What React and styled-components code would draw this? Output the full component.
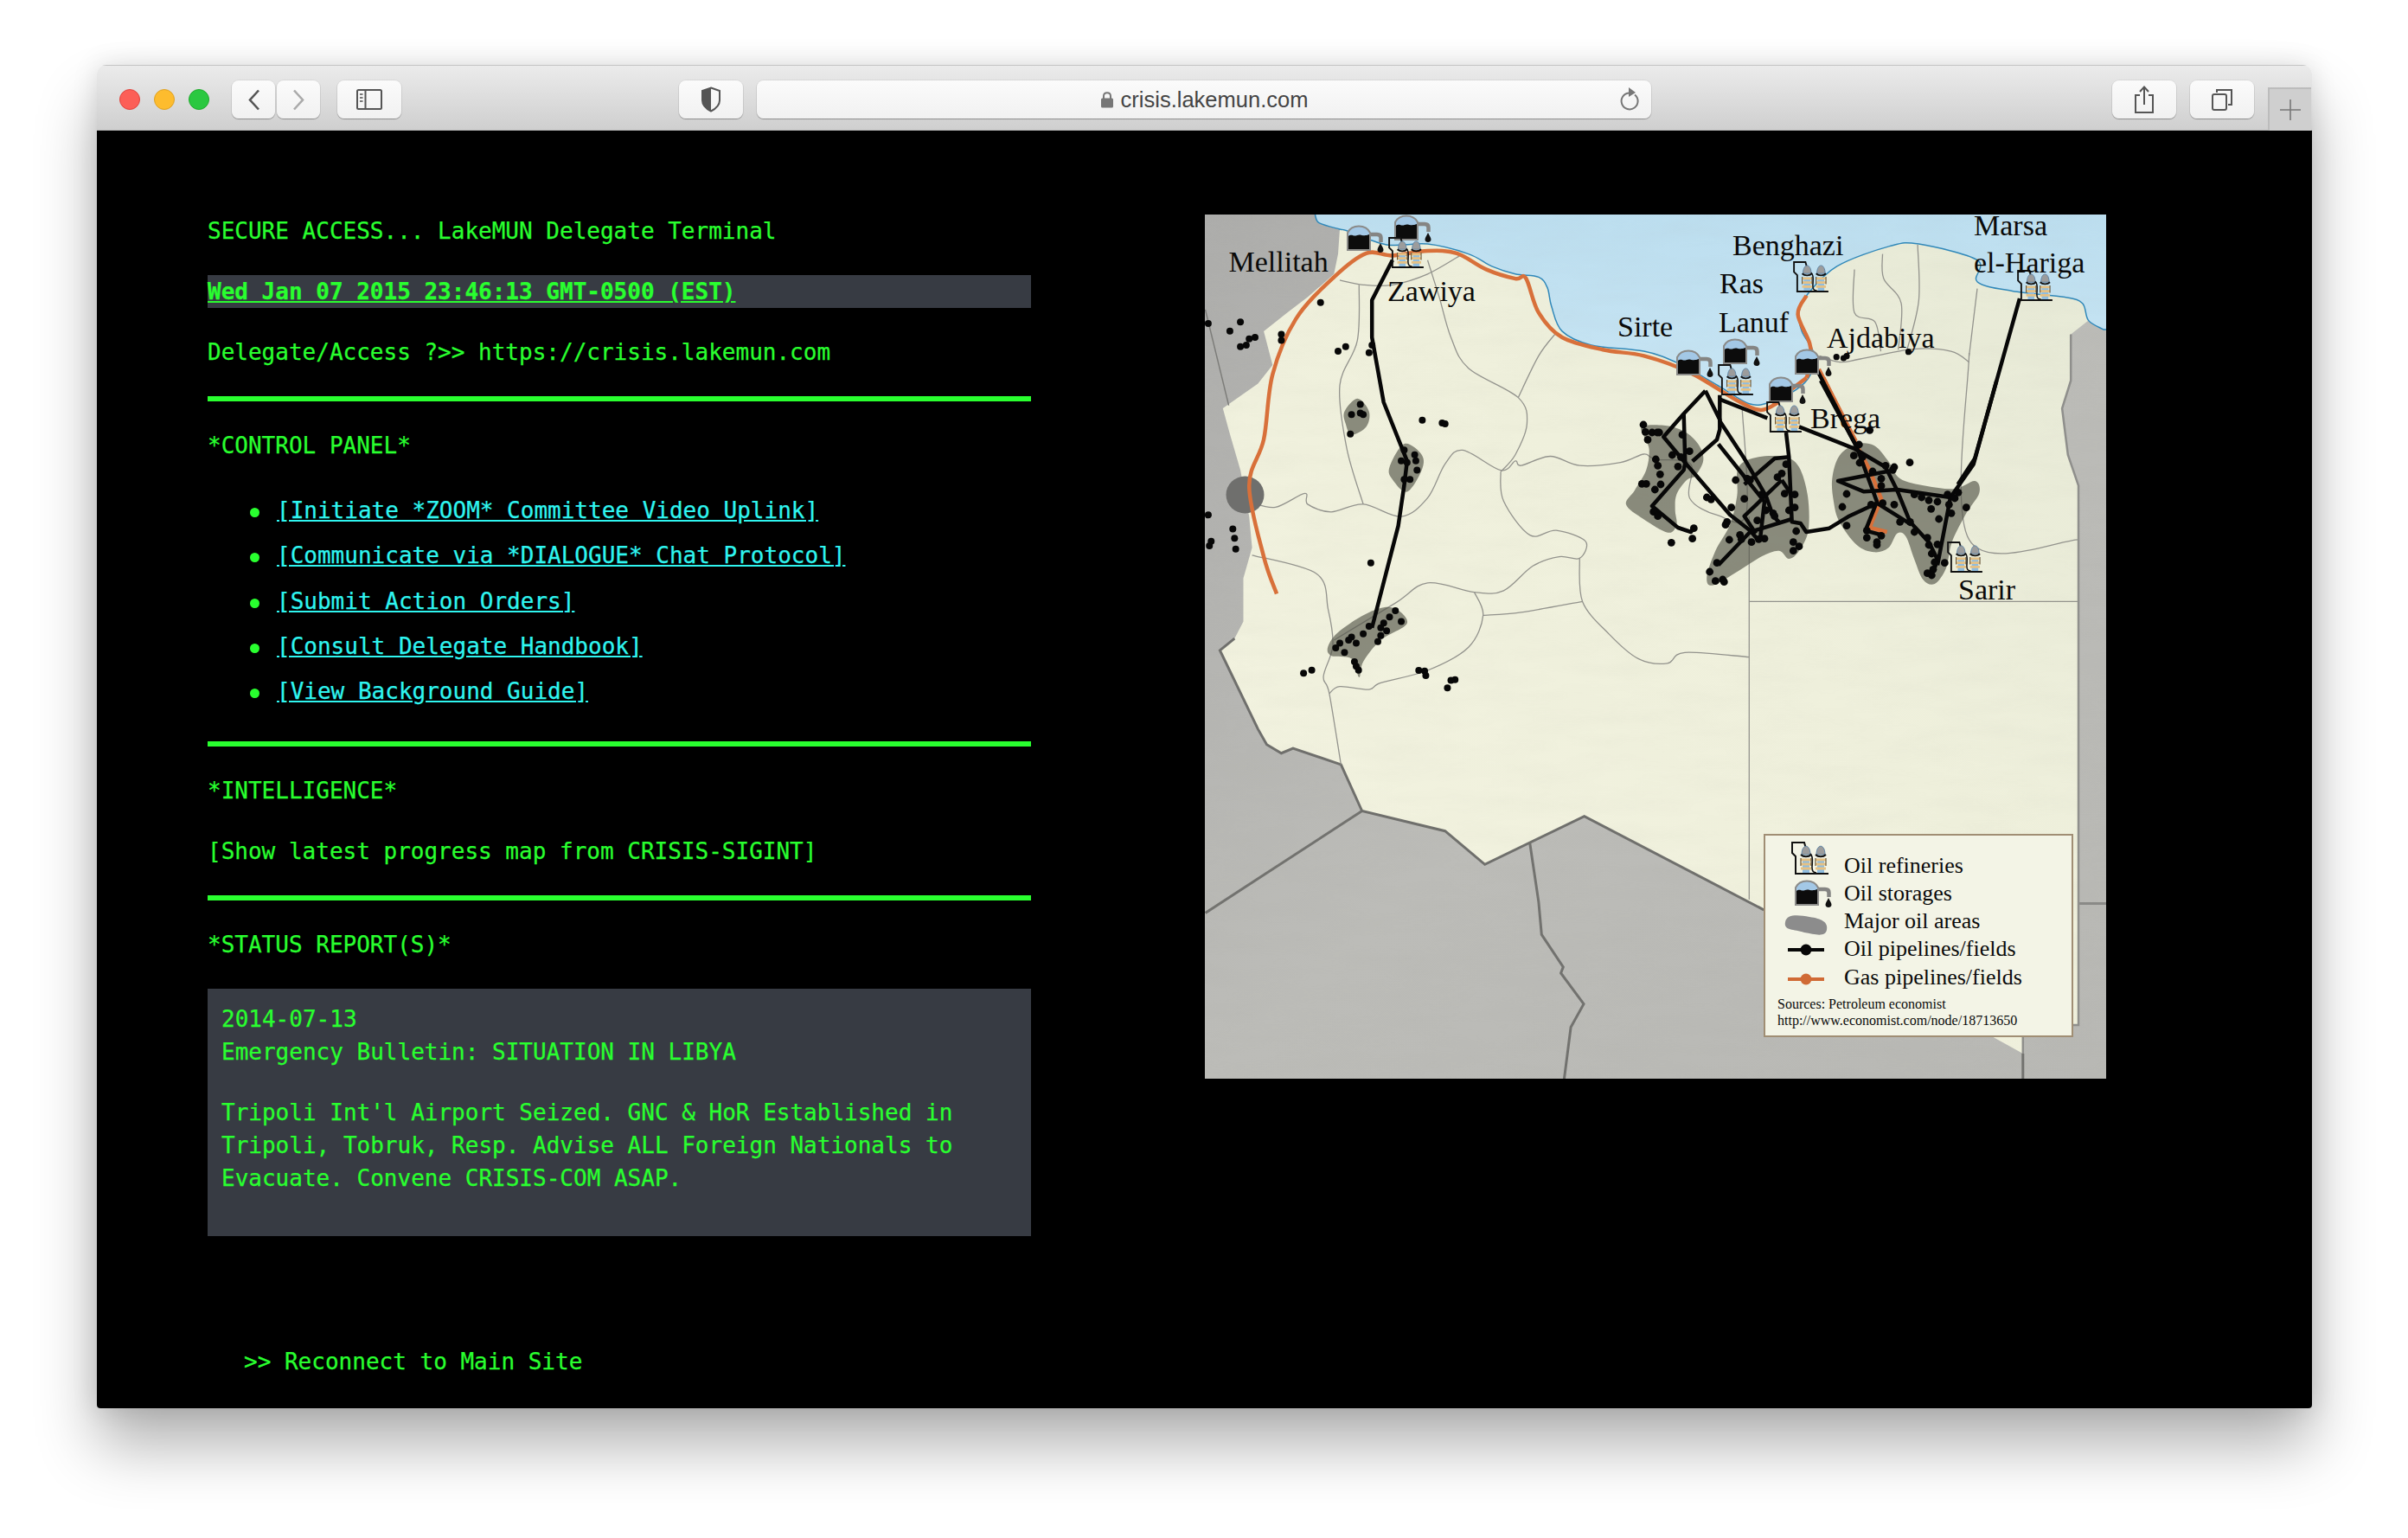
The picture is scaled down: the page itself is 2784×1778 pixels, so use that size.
import React from 'react'
import styled, { createGlobalStyle } from 'styled-components'

const GREEN = '#29ff2f'
const CYAN = '#2ff5f0'
const SLATE = '#373b43'

const GlobalStyle = createGlobalStyle`
  html, body { margin: 0; padding: 0; background: #fff; }
`

const Page = styled.div`
  width: 2784px;
  height: 1778px;
  padding: 75px 111px 0 112px;
  box-sizing: border-box;
  overflow: hidden;
`

const Window = styled.div`
  height: 1553px;
  display: flex;
  flex-direction: column;
  border-radius: 11px 11px 4px 4px;
  overflow: hidden;
  box-shadow: 0 44px 70px rgba(0, 0, 0, 0.3), 0 0 30px rgba(0, 0, 0, 0.12);
`

const TitleBar = styled.header`
  height: 76px;
  flex: none;
  box-sizing: border-box;
  display: flex;
  align-items: flex-start;
  padding: 17px 0 0 26px;
  background: linear-gradient(#ebebeb, #cfcfcf);
  border-top: 1px solid #c4c4c4;
  border-bottom: 1px solid #b5b5b5;
  font-family: 'Liberation Sans', Arial, sans-serif;
`

const Lights = styled.div`
  display: flex;
  gap: 16px;
  margin: 10px 26px 0 0;
`

const Light = styled.span`
  width: 24px;
  height: 24px;
  border-radius: 50%;
  box-sizing: border-box;
  background: ${p => p.$fill};
  border: 1px solid ${p => p.$edge};
`

const ToolButton = styled.div`
  flex: none;
  width: ${p => p.$w || 74}px;
  height: 44px;
  margin-left: ${p => p.$ml || 0}px;
  display: flex;
  align-items: center;
  justify-content: center;
  border-radius: 8px;
  background: linear-gradient(#fbfbfb, #f1f1f1);
  box-shadow: 0 1px 1px rgba(0, 0, 0, 0.3), 0 0 0 1px rgba(0, 0, 0, 0.05);
`

const UrlBar = styled(ToolButton)`
  width: 1034px;
  position: relative;
  gap: 8px;
  font-size: 25.5px;
  color: #444;
`

const Reload = styled.svg`
  position: absolute;
  right: 12px;
  top: 8px;
`

const NewTab = styled.div`
  flex: none;
  width: 50px;
  height: 50px;
  margin: 8px 0 0 16px;
  box-sizing: border-box;
  display: flex;
  align-items: center;
  justify-content: center;
  border-left: 2px solid #bcbcbc;
  border-top: 2px solid #bcbcbc;
  background: #cfcfcf;
`

const Screen = styled.main`
  flex: 1;
  display: flex;
  gap: 201px;
  padding: 97px 0 0 128px;
  background: #000;
  color: ${GREEN};
  font: 26px/38px 'DejaVu Sans Mono', 'Liberation Mono', monospace;
  -webkit-text-stroke: 0.25px currentColor;
`

const Terminal = styled.section`
  width: 952px;
  flex: none;
`

const Line = styled.p`
  margin: 0 0 32px;
  white-space: pre;
`

const DateLine = styled(Line)`
  background: ${SLATE};
  font-weight: 700;
  text-decoration: underline;
`

const Rule = styled.hr`
  height: 6px;
  margin: 0 0 32px;
  border: 0;
  background: ${GREEN};
`

const LinkList = styled.ul`
  list-style: none;
  margin: 37px 0 39px;
  padding: 0 0 0 80px;
  display: flex;
  flex-direction: column;
  gap: 14.25px;
`

const LinkItem = styled.li`
  position: relative;
  &::before {
    content: '';
    position: absolute;
    left: -31.5px;
    top: 16px;
    width: 11px;
    height: 11px;
    border-radius: 50%;
    background: ${GREEN};
  }
  a {
    color: ${CYAN};
    text-decoration: underline;
  }
`

const Report = styled.article`
  height: 286px;
  box-sizing: border-box;
  padding: 16px;
  background: ${SLATE};
  p {
    margin: 0 0 32px;
  }
`

const Reconnect = styled.p`
  margin: 126px 0 0;
  padding-left: 42px;
`

const MapFrame = styled.svg`
  flex: none;
  display: block;
  width: 1042px;
  height: 999px;
  -webkit-text-stroke: 0;
`

const CityLabel = styled.text`
  font-family: 'Liberation Serif', 'Times New Roman', serif;
  font-size: 34px;
  fill: #0a0a0a;
`

const LegendLabel = styled.text`
  font-family: 'Liberation Serif', 'Times New Roman', serif;
  font-size: 26px;
  fill: #0a0a0a;
`

const LegendSource = styled.text`
  font-family: 'Liberation Serif', 'Times New Roman', serif;
  font-size: 16px;
  fill: #0a0a0a;
`

// coordinates below were read off zoomed crops, these bring them back to page px
const z4 = ([x, y]) => [1380 + x / 1.479, 240 + y / 2.8]
const z9 = ([x, y]) => [1860 + x / 3, 440 + y / 3]
const z8 = ([x, y]) => [1860 + x / 2.8, 240 + y / 3]

const fmt = n => n.toFixed(1)
const poly = (pts, conv, closed) =>
  pts.map(conv).map((p, i) => `${i ? 'L' : 'M'}${fmt(p[0])} ${fmt(p[1])}`).join('') + (closed ? 'Z' : '')

// catmull-rom through the points, closed for the oil areas, open for the gas line
const curve = (pts, conv, closed) => {
  const p = pts.map(conv)
  const n = p.length
  const at = i => (closed ? p[(i + n) % n] : p[Math.max(0, Math.min(n - 1, i))])
  let d = `M${fmt(p[0][0])} ${fmt(p[0][1])}`
  for (let i = 0; i < (closed ? n : n - 1); i++) {
    const a = at(i - 1), b = at(i), c = at(i + 1), e = at(i + 2)
    d += `C${fmt(b[0] + (c[0] - a[0]) / 6)} ${fmt(b[1] + (c[1] - a[1]) / 6)} ${fmt(c[0] - (e[0] - b[0]) / 6)} ${fmt(c[1] - (e[1] - b[1]) / 6)} ${fmt(c[0])} ${fmt(c[1])}`
  }
  return d + (closed ? 'Z' : '')
}

const LAND = [[250,70],[247,150],[240,215],[195,290],[160,340],[120,400],[135,510],[110,570],[50,650],[60,720],[80,850],[95,1000],[100,1100],[85,1200],[85,1340],[70,1395],[45,1433],[110,1688],[125,1738],[150,1766],[170,1750],[252,1803],[288,1953],[430,2018],[498,2126],[668,1970],[975,2273],[1418,2738],[1418,2646],[1513,2646],[1513,900],[1495,800],[1485,650],[1500,560],[1500,410],[1530,365],[1560,395],[1600,395],[1600,0],[250,0]]

const SEA = [[208,25],[215,50],[250,70],[262,75],[330,120],[400,118],[470,150],[510,190],[550,215],[590,225],[605,260],[612,320],[630,400],[680,445],[770,465],[830,505],[900,580],[950,635],[985,630],[1030,590],[1055,540],[1060,470],[1040,400],[1035,340],[1050,280],[1100,190],[1190,125],[1240,118],[1340,170],[1340,240],[1400,270],[1490,290],[1520,310],[1530,365],[1556,395],[1600,395],[1600,-10],[208,-10]]

const DISTRICTS = [
  [[250,235],[290,250],[340,250],[400,215],[460,150]],
  [[400,170],[420,290],[440,420],[470,520],[555,615],[570,700],[550,800],[525,855]],
  [[283,250],[280,430],[250,575],[262,780],[290,960]],
  [[620,405],[590,480],[555,615]],
  [[100,955],[140,970],[190,925],[195,960],[235,985],[290,960],[355,1000],[400,940],[430,830],[460,785],[525,850],[550,820],[560,835],[610,805],[660,835],[730,825],[770,798],[790,815],[850,830],[848,940],[895,995],[945,990],[938,650]],
  [[525,855],[530,950],[575,1060],[620,1045],[670,1080],[660,1135],[625,1130],[580,1160],[530,1240],[480,1245],[400,1215],[345,1280],[240,1400]],
  [[100,1125],[210,1185],[230,1300],[238,1418],[222,1518],[232,1573],[252,1803]],
  [[660,1135],[665,1275],[710,1380],[760,1460],[810,1475],[840,1440],[950,1455]],
  [[665,1275],[560,1310],[495,1320]],
  [[480,1245],[495,1320],[470,1423],[400,1498],[320,1538],[300,1560],[250,1550],[232,1573]],
  [[950,1000],[950,2240]],
  [[950,1275],[1513,1275]],
  [[1326,470],[1326,1075],[1513,1075]],
  [[1326,500],[1295,465],[1230,458],[1140,490],[1105,500],[1070,480]],
  [[1130,200],[1130,340],[1165,370],[1175,465]],
  [[1178,150],[1180,230],[1210,310],[1205,460]],
  [[1238,120],[1240,300],[1220,460]],
  [[1340,262],[1326,480]],
]

const AREAS = [
  [[115,160],[190,155],[260,175],[310,220],[328,275],[300,330],[270,345],[235,395],[230,450],[235,500],[205,527],[120,480],[60,430],[90,380],[130,310],[140,240],[125,200]],
  [[450,300],[520,265],[610,265],[660,300],[690,400],[692,520],[660,590],[625,618],[590,590],[530,610],[450,660],[360,710],[340,680],[370,590],[420,500],[445,400]],
  [[775,340],[800,260],[860,220],[920,225],[970,280],[1010,340],[1100,365],[1200,375],[1270,348],[1285,390],[1240,460],[1190,560],[1170,650],[1130,705],[1090,690],[1060,620],[1030,540],[1000,530],[970,580],[920,595],[860,570],[800,490],[780,420]],
]

const WEST_AREAS = [
  [[258,660],[280,618],[300,660],[295,710],[270,735],[260,700]],
  [[335,840],[360,765],[390,800],[390,850],[365,920],[340,880]],
  [[230,1420],[250,1370],[300,1310],[340,1295],[365,1345],[320,1400],[290,1470],[283,1520],[270,1460],[235,1450]],
]

const OIL_LINES = [
  [[335,35],[260,115],[190,195],[265,285],[420,465],[490,520],[520,555]],
  [[260,115],[265,285],[260,310],[150,435],[240,510],[285,525],[295,510]],
  [[335,35],[385,135],[385,170],[375,205],[290,280]],
  [[385,50],[385,140],[470,270],[545,400],[570,470],[590,490]],
  [[380,220],[480,345],[540,420],[525,550]],
  [[385,65],[550,130]],
  [[660,160],[850,235],[960,300],[1000,380],[1045,490],[1110,560],[1140,620],[1130,650]],
  [[615,180],[625,265],[635,490],[665,495],[685,525],[765,512],[830,472],[930,425],[1050,500]],
  [[625,265],[575,270],[500,335],[470,360]],
  [[600,345],[470,470],[510,530]],
  [[600,345],[630,390]],
  [[635,480],[490,525],[380,640]],
  [[735,0],[860,230],[930,420],[890,520],[945,535]],
  [[965,315],[795,348],[885,385],[1000,378],[1185,405]],
  [[1345,0],[1265,290],[1185,405],[1140,640]],
]

const COAST_LINES = [
  [[1330,315],[1185,870],[1130,960]],
  [[675,565],[800,825]],
]

const WEST_PIPE = [[340,170],[305,300],[305,420],[325,630],[365,820],[360,900],[350,1030],[305,1360]]

const GAS_COAST = [[142,1250],[120,1130],[95,900],[120,750],[135,540],[175,360],[240,225],[295,148],[340,155],[400,140],[450,148],[500,200],[550,230],[568,228],[590,340],[630,420],[700,460],[770,480],[850,535],[930,625],[970,655],[1000,630]]
const GAS_EAST = [[640,590],[655,540],[650,470],[612,370],[640,305]]
const GAS_SOUTH = [[745,-10],[860,225],[905,310],[945,410],[905,510],[965,525]]
const GAS_BREGA = [[530,680],[640,590]]
const GAS_LINK = [[680,560],[800,810]]

const WEST_DOTS = [[217,307],[25,375],[80,370],[62,400],[105,420],[95,425],[90,445],[80,450],[150,410],[150,430],[260,450],[247,465],[305,445],[300,470],[285,637],[285,665],[270,670],[290,670],[268,733],[391,688],[425,697],[430,700],[360,785],[378,800],[380,820],[355,820],[365,825],[382,850],[370,880],[360,880],[25,995],[67,1040],[70,1070],[72,1105],[30,1080],[27,1095],[303,1150],[345,1305],[335,1325],[355,1340],[325,1345],[300,1355],[320,1360],[290,1380],[270,1390],[320,1385],[250,1410],[278,1410],[315,1405],[258,1440],[243,1425],[265,1400],[330,1370],[275,1470],[278,1485],[282,1497],[188,1507],[202,1497],[385,1498],[395,1500],[397,1515],[447,1528],[440,1530],[434,1555]]

const EAST_DOTS = [[120,153],[127,178],[150,180],[175,180],[135,205],[168,180],[255,188],[220,258],[250,265],[280,245],[240,298],[163,273],[170,295],[178,325],[115,358],[130,358],[180,360],[160,378],[155,455],[170,470],[295,512],[290,548],[217,562],[340,405],[355,412],[440,345],[480,340],[490,345],[600,322],[615,290],[585,335],[470,410],[530,395],[610,392],[645,395],[545,450],[515,485],[570,460],[575,470],[645,440],[625,450],[410,490],[405,500],[418,552],[455,535],[460,550],[495,560],[540,548],[520,550],[650,522],[660,575],[640,590],[640,560],[375,632],[350,663],[370,695],[395,690],[400,698],[425,440],[868,222],[850,260],[870,285],[880,265],[915,315],[960,295],[990,300],[985,310],[1044,284],[945,340],[945,365],[825,393],[810,438],[825,503],[910,430],[950,425],[990,430],[1010,490],[1045,490],[1060,525],[895,520],[895,545],[945,538],[930,560],[930,570],[1060,395],[1085,405],[1110,415],[1140,420],[1118,445],[1145,480],[1175,395],[1212,388],[1200,408],[1180,430],[1188,460],[1240,440],[1105,545],[1110,570],[1140,568],[1120,600],[1130,630],[1125,655],[1105,668],[1120,675],[1165,632],[905,172]]

const COAST_DOTS = [[737,518],[760,522],[770,515],[970,500]]

const CITIES = [
  ['Mellitah', 1420.5, 314], ['Zawiya', 1604, 348], ['Sirte', 1870, 389],
  ['Benghazi', 2003, 295], ['Ras', 1988, 339], ['Lanuf', 1987, 384],
  ['Ajdabiya', 2112, 402], ['Brega', 2093, 495], ['Sarir', 2264, 693],
  ['Marsa', 2282, 272], ['el-Hariga', 2282, 315],
]

const REFINERIES = [[1606, 274], [2074, 302], [2333, 312], [1987, 421], [2043, 464], [2252, 626]]
const STORAGES = [[1557, 260], [1612, 248], [1938, 404], [1992, 391], [2075, 403], [2045, 435]]

const LEGEND = [
  ['Oil refineries', 1009], ['Oil storages', 1041], ['Major oil areas', 1073],
  ['Oil pipelines/fields', 1105], ['Gas pipelines/fields', 1138],
]

function LibyaMap() {
  return (
    <MapFrame viewBox="1393 248 1042 999">
      <defs>
        <linearGradient id="land" x1="1" y1="0" x2="0" y2="1">
          <stop offset="0" stopColor="#e6e9d6" />
          <stop offset="0.45" stopColor="#eff0dc" />
          <stop offset="1" stopColor="#f3f3e0" />
        </linearGradient>
        <linearGradient id="ground" x1="0" y1="0" x2="1" y2="1">
          <stop offset="0" stopColor="#adadab" />
          <stop offset="0.5" stopColor="#bcbcb8" />
          <stop offset="1" stopColor="#b8b8b4" />
        </linearGradient>
        <linearGradient id="sea" x1="0" y1="0" x2="0" y2="1">
          <stop offset="0" stopColor="#bcdeef" />
          <stop offset="1" stopColor="#c8e5f4" />
        </linearGradient>
        <filter id="relief" x="0" y="0" width="100%" height="100%">
          <feTurbulence type="fractalNoise" baseFrequency="0.012 0.05" numOctaves="4" seed="7" />
          <feColorMatrix values="0 0 0 0 0.3  0 0 0 0 0.3  0 0 0 0 0.25  0 0 0 0.35 -0.1" />
        </filter>
        <symbol id="refinery" viewBox="0 0 42 38" overflow="visible">
          <path d="M4 37V17L0 13V1H14L16 8" fill="none" stroke="#111" strokeWidth="2" />
          {[16, 33].map(x => (
            <g key={x}>
              <rect x={x - 4} y="20" width="8" height="16" fill="#8fbde0" />
              <path d={`M${x - 5} 15C${x - 5} 2 ${x + 5} 2 ${x + 5} 15Z`} fill="#9c9c9c" stroke="#5d83a5" strokeWidth="1" />
              <path d={`M${x - 6} 15C${x - 3} 18 ${x + 3} 18 ${x + 6} 15`} fill="none" stroke="#111" strokeWidth="2" />
              <path d={`M${x - 6} 21H${x + 6}M${x - 6} 26H${x + 6}M${x - 6} 31H${x + 6}`} stroke="#e6c184" strokeWidth="2.8" />
              <path d={`M${x - 6} 19V28M${x + 6} 19V28`} stroke="#6b5a3e" strokeWidth="1.2" />
            </g>
          ))}
          <path d="M21 14C25 17 23 25 23 30C23 35 26 36 28 36" fill="none" stroke="#111" strokeWidth="1.6" />
          <path d="M3 37H42" stroke="#111" strokeWidth="2.2" />
        </symbol>
        <symbol id="storage" viewBox="0 0 42 33" overflow="visible">
          <path d="M27 11H35Q39.5 11 39.5 15V20" fill="none" stroke="#858583" strokeWidth="4.5" />
          <path d="M1 29V9C6 -1 22 -1 27 9V29Z" fill="#a3c8e6" stroke="#8b8b89" strokeWidth="2" />
          <path d="M2 13C6 10 8 14 12 12C16 10 19 14 26 11V28H2Z" fill="#0c0c0c" />
          <path d="M39 21C37 25 35.5 27 35.5 29C35.5 33 42.5 33 42.5 29C42.5 27 41 25 39 21Z" fill="#111" />
        </symbol>
      </defs>

      <rect x="1393" y="248" width="1042" height="999" fill="url(#ground)" />
      <path d={poly(LAND, z4, true)} fill="url(#land)" />
      <path d={poly([[288,1953],[20,2283]], z4)} fill="none" stroke="#72726f" strokeWidth="3" />
      <path d={poly([[575,2058],[590,2248],[595,2353],[632,2458],[628,2478],[667,2578],[645,2653],[633,2830]], z4)} fill="none" stroke="#72726f" strokeWidth="3" />
      <path d={poly([[1418,2738],[1418,2830]], z4)} fill="none" stroke="#72726f" strokeWidth="3" />
      <path d={poly([[1513,2253],[1570,2253]], z4)} fill="none" stroke="#8a8a87" strokeWidth="3" />
      <path d={poly([[20,330],[60,640]], z4)} fill="none" stroke="#7c7c79" strokeWidth="1.5" />
      <path d={poly(LAND.slice(15, 27), z4)} fill="none" stroke="#6f6f6c" strokeWidth="3" />
      <path d={poly(LAND.slice(27, 35), z4)} fill="none" stroke="#8f8f8c" strokeWidth="2.5" />
      {DISTRICTS.map((d, i) => (
        <path key={i} d={curve(d, z4)} fill="none" stroke="#93938d" strokeWidth="1.3" strokeLinejoin="round" />
      ))}
      <path d={curve(SEA.slice(0, 35), z4) + poly(SEA.slice(35), z4).replace('M', 'L') + 'Z'} fill="url(#sea)" stroke="#2f88ba" strokeWidth="1.5" />
      <rect x="1393" y="248" width="1042" height="999" filter="url(#relief)" opacity="0.18" />

      <ellipse cx="1439.5" cy="572" rx="22" ry="21.5" fill="#6f6f6d" />
      {AREAS.map((a, i) => <path key={i} d={curve(a, z9, true)} fill="#55564a" fillOpacity="0.66" />)}
      {WEST_AREAS.map((a, i) => <path key={i} d={curve(a, z4, true)} fill="#55564a" fillOpacity="0.66" />)}

      <g fill="none" stroke="#d8703a" strokeWidth="4.5" strokeLinejoin="round">
        <path d={curve(GAS_COAST, z4)} />
        <path d={curve(GAS_EAST, z8)} />
        <path d={poly(GAS_BREGA, z8)} />
        <path d={poly(GAS_LINK, z8)} />
        <path d={poly(GAS_SOUTH, z9)} />
      </g>
      <g fill="none" stroke="#070707" strokeWidth="4.5" strokeLinejoin="round">
        {OIL_LINES.map((l, i) => <path key={i} d={poly(l, z9)} />)}
        {COAST_LINES.map((l, i) => <path key={i} d={poly(l, z8)} />)}
        <path d={poly(WEST_PIPE, z4)} />
      </g>
      <g fill="#070707">
        {WEST_DOTS.map(z4).map(([x, y], i) => <circle key={i} cx={x} cy={y} r="4" />)}
        {EAST_DOTS.map(z9).map(([x, y], i) => <circle key={i} cx={x} cy={y} r="4.4" />)}
        {COAST_DOTS.map(z8).map(([x, y], i) => <circle key={i} cx={x} cy={y} r="3.6" />)}
      </g>

      {STORAGES.map(([x, y]) => <use key={x} href="#storage" x={x} y={y} width="42" height="33" />)}
      {REFINERIES.map(([x, y]) => <use key={x} href="#refinery" x={x} y={y} width="40" height="36" />)}
      {CITIES.map(([name, x, y]) => <CityLabel key={name} x={x} y={y}>{name}</CityLabel>)}

      <rect x="2040" y="965" width="356" height="233" fill="#f3f4e6" stroke="#a08e74" strokeWidth="2" />
      <use href="#refinery" x="2072" y="973" width="42" height="38" />
      <use href="#storage" x="2075" y="1017" width="42" height="33" />
      <path d="M2064 1066C2066 1056 2080 1058 2092 1060C2106 1062 2114 1066 2112 1075C2110 1084 2098 1080 2086 1078C2074 1074 2062 1076 2064 1066Z" fill="#8c8c8c" />
      <path d="M2067 1098H2109" stroke="#070707" strokeWidth="4" />
      <circle cx="2088" cy="1098" r="6.5" fill="#070707" />
      <path d="M2067 1132H2109" stroke="#d06a35" strokeWidth="4" />
      <circle cx="2088" cy="1132" r="6.5" fill="#d06a35" />
      {LEGEND.map(([label, y]) => <LegendLabel key={label} x="2132" y={y}>{label}</LegendLabel>)}
      <LegendSource x="2055" y="1166">Sources: Petroleum economist</LegendSource>
      <LegendSource x="2055" y="1185">http://www.economist.com/node/18713650</LegendSource>
    </MapFrame>
  )
}

const LINKS = [
  '[Initiate *ZOOM* Committee Video Uplink]',
  '[Communicate via *DIALOGUE* Chat Protocol]',
  '[Submit Action Orders]',
  '[Consult Delegate Handbook]',
  '[View Background Guide]',
]

function BrowserBar() {
  return (
    <TitleBar>
      <Lights>
        <Light $fill="#fc5f57" $edge="#e0443e" />
        <Light $fill="#fdbc2e" $edge="#dea123" />
        <Light $fill="#2ac840" $edge="#1eab2b" />
      </Lights>
      <ToolButton $w={50}>
        <svg width="15" height="25" viewBox="0 0 15 25"><path d="M13 1.5L3 12.5L13 23.5" fill="none" stroke="#555" strokeWidth="2.6" /></svg>
      </ToolButton>
      <ToolButton $w={50} $ml={2}>
        <svg width="15" height="25" viewBox="0 0 15 25"><path d="M2 1.5L12 12.5L2 23.5" fill="none" stroke="#aaa" strokeWidth="2.6" /></svg>
      </ToolButton>
      <ToolButton $ml={20}>
        <svg width="30" height="24" viewBox="0 0 30 24">
          <rect x="1" y="1" width="28" height="22" rx="1.5" fill="none" stroke="#555" strokeWidth="2" />
          <path d="M10.5 1V23" stroke="#555" strokeWidth="2" />
          <path d="M4 6H7.5M4 10H7.5M4 14H7.5" stroke="#777" strokeWidth="2" />
        </svg>
      </ToolButton>
      <ToolButton $ml={321}>
        <svg width="24" height="30" viewBox="0 0 24 30">
          <path d="M12 1.5L22 5V16C22 22 17 26 12 28.5C7 26 2 22 2 16V5Z" fill="none" stroke="#555" strokeWidth="2" />
          <path d="M12 1.5V28.5C7 26 2 22 2 16V5Z" fill="#555" />
        </svg>
      </ToolButton>
      <UrlBar $ml={16}>
        <svg width="16" height="20" viewBox="0 0 16 20">
          <path d="M4 9V6C4 1 12 1 12 6V9" fill="none" stroke="#777" strokeWidth="2" />
          <rect x="1" y="8.5" width="14" height="11" rx="1.5" fill="#777" />
        </svg>
        crisis.lakemun.com
        <Reload width="26" height="28" viewBox="0 0 26 28">
          <path d="M19 8.5A9.5 9.5 0 1 1 12 6.5" fill="none" stroke="#777" strokeWidth="2" />
          <path d="M12 0L20 6L12 11Z" fill="#777" />
        </Reload>
      </UrlBar>
      <ToolButton $ml={533}>
        <svg width="24" height="32" viewBox="0 0 24 32">
          <path d="M7 11H2V31H22V11H17" fill="none" stroke="#555" strokeWidth="2" />
          <path d="M12 22V2M7 7L12 1.5L17 7" fill="none" stroke="#555" strokeWidth="2" />
        </svg>
      </ToolButton>
      <ToolButton $ml={16}>
        <svg width="26" height="26" viewBox="0 0 26 26">
          <path d="M7 5V2H24V19H20" fill="none" stroke="#555" strokeWidth="2" />
          <rect x="2" y="7" width="16" height="18" rx="2" fill="none" stroke="#555" strokeWidth="2" />
        </svg>
      </ToolButton>
      <NewTab>
        <svg width="24" height="24" viewBox="0 0 24 24"><path d="M12 0V24M0 12H24" stroke="#777" strokeWidth="1.6" /></svg>
      </NewTab>
    </TitleBar>
  )
}

export default function App() {
  return (
    <Page>
      <GlobalStyle />
      <Window>
        <BrowserBar />
        <Screen>
          <Terminal>
            <Line>SECURE ACCESS... LakeMUN Delegate Terminal</Line>
            <DateLine>Wed Jan 07 2015 23:46:13 GMT-0500 (EST)</DateLine>
            <Line>Delegate/Access ?&gt;&gt; https://crisis.lakemun.com</Line>
            <Rule />
            <Line>*CONTROL PANEL*</Line>
            <LinkList>
              {LINKS.map(text => (
                <LinkItem key={text}><a href="#">{text}</a></LinkItem>
              ))}
            </LinkList>
            <Rule />
            <Line>*INTELLIGENCE*</Line>
            <Line>[Show latest progress map from CRISIS-SIGINT]</Line>
            <Rule />
            <Line>*STATUS REPORT(S)*</Line>
            <Report>
              <p>2014-07-13<br />Emergency Bulletin: SITUATION IN LIBYA</p>
              <p>Tripoli Int'l Airport Seized. GNC &amp; HoR Established in Tripoli, Tobruk, Resp. Advise ALL Foreign Nationals to Evacuate. Convene CRISIS-COM ASAP.</p>
            </Report>
            <Reconnect>&gt;&gt; Reconnect to Main Site</Reconnect>
          </Terminal>
          <LibyaMap />
        </Screen>
      </Window>
    </Page>
  )
}
